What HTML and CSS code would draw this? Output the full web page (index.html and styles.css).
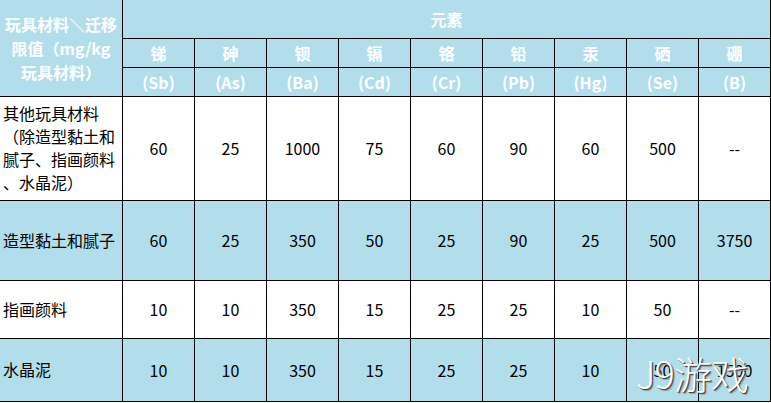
FILE: index.html
```html
<!DOCTYPE html>
<html lang="zh-CN">
<head>
<meta charset="utf-8">
<title>玩具材料迁移限值</title>
<link rel="stylesheet" href="styles.css">
</head>
<body>
<div class="page">
<table class="limits">
  <colgroup>
    <col class="c-first">
    <col class="c-el"><col class="c-el"><col class="c-el"><col class="c-el"><col class="c-el"><col class="c-el"><col class="c-el"><col class="c-el"><col class="c-el">
  </colgroup>
  <thead>
    <tr class="h1">
      <th class="corner" rowspan="3"><span class="ln">玩具材料＼迁移</span><span class="ln">限值（mg/kg</span><span class="ln">玩具材料）</span></th>
      <th colspan="9">元素</th>
    </tr>
    <tr class="h2">
      <th>锑</th><th>砷</th><th>钡</th><th>镉</th><th>铬</th><th>铅</th><th>汞</th><th>硒</th><th>硼</th>
    </tr>
    <tr class="h3">
      <th>(Sb)</th><th>(As)</th><th>(Ba)</th><th>(Cd)</th><th>(Cr)</th><th>(Pb)</th><th>(Hg)</th><th>(Se)</th><th>(B)</th>
    </tr>
  </thead>
  <tbody>
    <tr class="r1">
      <td class="name"><span class="ln">其他玩具材料</span><span class="ln">（除造型黏土和</span><span class="ln">腻子、指画颜料</span><span class="ln">、水晶泥）</span></td>
      <td>60</td><td>25</td><td>1000</td><td>75</td><td>60</td><td>90</td><td>60</td><td>500</td><td>--</td>
    </tr>
    <tr class="r2 blue">
      <td class="name">造型黏土和腻子</td>
      <td>60</td><td>25</td><td>350</td><td>50</td><td>25</td><td>90</td><td>25</td><td>500</td><td>3750</td>
    </tr>
    <tr class="r3">
      <td class="name">指画颜料</td>
      <td>10</td><td>10</td><td>350</td><td>15</td><td>25</td><td>25</td><td>10</td><td>50</td><td>--</td>
    </tr>
    <tr class="r4 blue">
      <td class="name">水晶泥</td>
      <td>10</td><td>10</td><td>350</td><td>15</td><td>25</td><td>25</td><td>10</td><td>50</td><td>1500</td>
    </tr>
  </tbody>
</table>
<div class="watermark">J9游戏</div>
</div>
</body>
</html>
```
FILE: styles.css
```css
html, body {
  margin: 0;
  padding: 0;
  background: #ffffff;
}
.page {
  position: relative;
  width: 771px;
  height: 403px;
  overflow: hidden;
  font-family: "Noto Sans CJK SC", "Noto Sans", sans-serif;
}
.limits {
  border-collapse: collapse;
  table-layout: fixed;
  width: 771px;
  margin-left: -1px;
}
.c-first { width: 123px; }
.c-el { width: 72px; }
.limits th, .limits td {
  border: 1px solid #000;
  padding: 0;
  text-align: center;
  vertical-align: middle;
}
.ln {
  display: block;
  white-space: nowrap;
}
.limits thead th {
  background: #b2deec;
  color: #ffffff;
  font-weight: bold;
  font-size: 16px;
}
.limits th.corner {
  border-top: none;
  font-size: 16px;
  line-height: 24px;
  padding: 0;
}
.h1 th { border-top: none; }
.h1 { height: 38px; }
.h2 { height: 29px; }
.h3 { height: 29px; }
.r1 { height: 104px; }
.r2 { height: 80px; }
.r3 { height: 58px; }
.r4 { height: 63px; }
.limits td {
  font-size: 16px;
  color: #000;
}
.blue td { background: #b2deec; }
.limits td.name {
  text-align: left;
  font-size: 16px;
  line-height: 23px;
  padding: 0 0 0 3px;
}
.watermark {
  position: absolute;
  left: 636px;
  top: 345px;
  font-size: 38px;
  font-weight: 300;
  color: #ffffff;
  letter-spacing: -1px;
  text-shadow: 1px 1px 0 #444, 2px 2px 1px #999;
}
```
